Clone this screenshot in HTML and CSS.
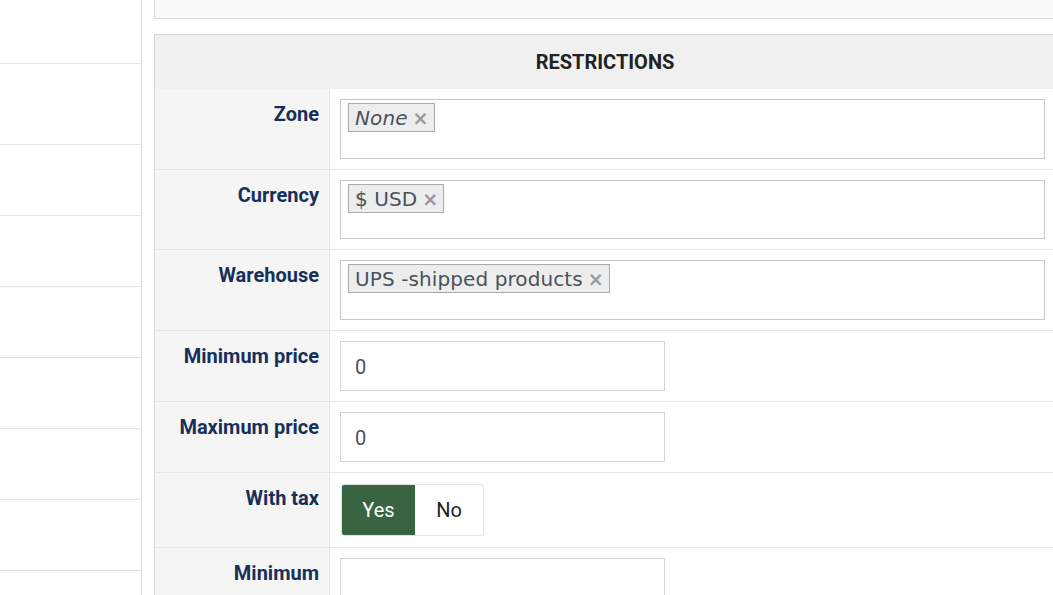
FILE: index.html
```html
<!DOCTYPE html>
<html>
<head>
<meta charset="utf-8">
<link rel="stylesheet" href="styles.css">
</head>
<body>
<div class="page">
  <aside class="sidebar">
    <div class="side-item first"></div>
    <div class="side-item tall"></div>
    <div class="side-item"></div>
    <div class="side-item"></div>
    <div class="side-item"></div>
    <div class="side-item"></div>
    <div class="side-item"></div>
    <div class="side-item"></div>
  </aside>
  <main class="main">
    <div class="top-panel"></div>
    <section class="panel">
      <div class="panel-head">RESTRICTIONS</div>
      <div class="row tag-row">
        <div class="label">Zone</div>
        <div class="value">
          <div class="tagbox"><span class="tag italic">None<span class="x">×</span></span></div>
        </div>
      </div>
      <div class="row tag-row r2">
        <div class="label">Currency</div>
        <div class="value">
          <div class="tagbox"><span class="tag">$ USD<span class="x">×</span></span></div>
        </div>
      </div>
      <div class="row tag-row">
        <div class="label">Warehouse</div>
        <div class="value">
          <div class="tagbox"><span class="tag">UPS -shipped products<span class="x">×</span></span></div>
        </div>
      </div>
      <div class="row">
        <div class="label">Minimum price</div>
        <div class="value"><div class="input">0</div></div>
      </div>
      <div class="row">
        <div class="label">Maximum price</div>
        <div class="value"><div class="input">0</div></div>
      </div>
      <div class="row toggle-row">
        <div class="label">With tax</div>
        <div class="value">
          <div class="toggle"><span class="opt on">Yes</span><span class="opt">No</span></div>
        </div>
      </div>
      <div class="row">
        <div class="label">Minimum</div>
        <div class="value"><div class="input"></div></div>
      </div>
    </section>
  </main>
</div>
</body>
</html>
```

FILE: styles.css
```css
html, body {
  margin: 0;
  padding: 0;
  background: #fff;
  overflow: hidden;
  font-family: Roboto, "Liberation Sans", sans-serif;
}
.page {
  display: flex;
  align-items: flex-start;
  width: 1200px;
}
.sidebar {
  width: 141px;
  flex: none;
  border-right: 1px solid #dcdcdc;
  height: 620px;
}
.side-item {
  height: 70px;
  border-bottom: 1px solid #e2e2e2;
}
.side-item.first { height: 63px; }
.side-item.tall { height: 80px; }
.main {
  padding-left: 12px;
  flex: none;
}
.top-panel {
  width: 900px;
  height: 18px;
  background: #fafafa;
  border: 1px solid #d8d8d8;
  border-top: none;
}
.panel {
  margin-top: 15px;
  width: 900px;
  border: 1px solid #d8d8d8;
  border-bottom: none;
}
.panel-head {
  height: 54px;
  background: #f0f0f0;
  text-align: center;
  font-weight: 700;
  font-size: 20px;
  line-height: 54px;
  color: #222;
}
.row {
  display: flex;
  border-top: 1px solid #e6e6e6;
}
.panel-head + .row { border-top: none; }
.label {
  width: 164px;
  flex: none;
  background: #f5f5f5;
  border-right: 1px solid #e6e6e6;
  text-align: right;
  padding: 13px 10px 0 0;
  font-size: 20px;
  line-height: 24px;
  font-weight: 700;
  color: #17305a;
}
.value {
  padding: 10px;
  flex: 1;
}
.tagbox {
  height: 60px;
  border: 1px solid #c8c8c8;
  padding: 3px 7px;
  box-sizing: border-box;
}
.r2 .tagbox { height: 59px; }
.tag {
  display: inline-flex;
  align-items: center;
  height: 29px;
  box-sizing: border-box;
  border: 1px solid #aaa;
  background: #ededed;
  padding: 0 5px 0 6px;
  font-family: "DejaVu Sans", Verdana, sans-serif;
  font-size: 20px;
  letter-spacing: 0.1px;
  color: #4a525b;
}
.tag.italic { font-style: italic; }
.tag .x {
  font-style: normal;
  font-weight: 700;
  color: #999;
  margin-left: 5px;
  font-size: 19px;
}
.input {
  width: 309px;
  height: 48px;
  border: 1px solid #d0d4d9;
  padding-left: 14px;
  font-size: 20px;
  line-height: 50px;
  color: #4a525b;
}
.toggle-row .value { padding: 11px 10px 11px 11px; }
.toggle {
  display: inline-flex;
  border: 1px solid #dfe2e6;
  border-radius: 3px;
  overflow: hidden;
  height: 52px;
  box-sizing: border-box;
}
.opt {
  width: 68px;
  display: flex;
  align-items: center;
  justify-content: center;
  font-size: 20px;
  color: #222;
  background: #fff;
}
.opt.on {
  width: 73px;
  background: #386442;
  color: #fff;
}
```
